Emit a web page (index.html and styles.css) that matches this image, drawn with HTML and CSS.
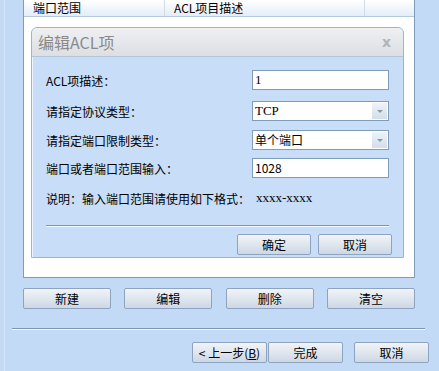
FILE: index.html
```html
<!DOCTYPE html>
<html lang="zh-CN">
<head>
  <meta charset="UTF-8" />
  <title>编辑ACL项</title>
  <link rel="stylesheet" href="styles.css">
</head>
<body>
  <div class="wizard">
    <div class="list">
      <div class="list-head">
        <div class="col col-port">端口范围</div>
        <div class="col col-desc">ACL项目描述</div>
        <div class="col col-rest"></div>
      </div>
      <div class="list-body"></div>
    </div>

    <div class="list-actions">
      <button class="btn btn-wide">新建</button>
      <button class="btn btn-wide">编辑</button>
      <button class="btn btn-wide">删除</button>
      <button class="btn btn-wide">清空</button>
    </div>

    <div class="sep wizard-sep"></div>

    <div class="wizard-nav">
      <button class="btn btn-nav">&lt; 上一步(<u>B</u>)</button>
      <button class="btn btn-nav">完成</button>
      <button class="btn btn-nav btn-cancel">取消</button>
    </div>

    <div class="dialog">
      <div class="dialog-title">
        <span>编辑ACL项</span>
        <span class="dialog-close">x</span>
      </div>
      <div class="dialog-body">
        <div class="row row-1">
          <label>ACL项描述：</label>
          <div class="field"><span class="val serif">1</span></div>
        </div>
        <div class="row row-2">
          <label>请指定协议类型：</label>
          <div class="field select"><span class="val serif">TCP</span><span class="drop"></span></div>
        </div>
        <div class="row row-3">
          <label>请指定端口限制类型：</label>
          <div class="field select"><span class="val">单个端口</span><span class="drop"></span></div>
        </div>
        <div class="row row-4">
          <label>端口或者端口范围输入：</label>
          <div class="field"><span class="val">1028</span></div>
        </div>
        <div class="row row-note">
          <label>说明：输入端口范围请使用如下格式：</label>
          <span class="serif note">xxxx-xxxx</span>
        </div>
        <div class="sep dialog-sep"></div>
        <div class="dialog-actions">
          <button class="btn btn-dlg">确定</button>
          <button class="btn btn-dlg">取消</button>
        </div>
      </div>
    </div>
  </div>
</body>
</html>
```

FILE: styles.css
```css
body {
  margin: 0;
  width: 439px;
  height: 371px;
  overflow: hidden;
  background: #c3daf7;
  font-family: "Noto Sans CJK SC", "DejaVu Sans", sans-serif;
  font-size: 12px;
  color: #000;
}
.wizard {
  position: relative;
  height: 371px;
  border-left: 1px solid #d3e4fa;
  margin-left: 4px;
}
.list {
  margin-left: 18px;
  width: 390px;
  height: 277px;
  background: #fff;
  border: 1px solid #7f9db9;
  border-top: none;
  display: flex;
  flex-direction: column;
}
.list-head {
  display: flex;
  height: 16px;
  background: linear-gradient(#ffffff, #e4edf8);
  border-bottom: 1px solid #b5c8e0;
  line-height: 15px;
}
.col {
  padding-left: 9px;
  border-right: 1px solid #d2dbe6;
}
.col-port { width: 131px; }
.col-desc { width: 190px; }
.col-rest { flex: 1; border-right: none; }
.list-body { flex: 1; }

.btn {
  font-family: "Noto Sans CJK SC", "DejaVu Sans", sans-serif;
  font-size: 12px;
  color: #000;
  height: 21px;
  padding: 0;
  line-height: 19px;
  border: 1px solid #8ea3bf;
  border-radius: 2px;
  background: linear-gradient(#f1f4f8, #dfe6ee 50%, #cdd8e5);
}
.list-actions {
  display: flex;
  justify-content: space-between;
  margin: 10px 0 0 18px;
  width: 392px;
}
.btn-wide { width: 88px; }

.sep {
  height: 1px;
  background: #7f95b1;
  border-bottom: 1px solid #f3f8fe;
}
.wizard-sep {
  margin: 19px 14px 0 7px;
}
.wizard-nav {
  display: flex;
  margin: 12px 0 0 187px;
}
.btn-nav { width: 75px; height: 21px; margin-right: 0; }
.btn-nav + .btn-nav { margin-left: 1px; }
.btn-nav.btn-cancel { margin-left: 11px; }

.dialog {
  position: absolute;
  left: 26px;
  top: 27px;
  width: 371px;
  height: 229px;
  border: 1px solid #9db3cf;
  border-radius: 6px 6px 0 0;
  background: #c7ddf8;
  display: flex;
  flex-direction: column;
}
.dialog-title {
  height: 28px;
  display: flex;
  justify-content: space-between;
  align-items: center;
  padding: 0 12px 0 6px;
  border-radius: 5px 5px 0 0;
  background: linear-gradient(#eef0f2, #dcdfe3);
  border-bottom: 1px solid #b4c3d6;
  font-size: 16px;
  color: #8a8a8a;
}
.dialog-close {
  font-size: 14px;
  color: #b0b4ba;
  font-family: "DejaVu Sans", sans-serif;
  font-weight: bold;
}
.dialog-body {
  flex: 1;
  border-left: 1px solid #eef5fd;
  padding: 13px 14px 0 13px;
}
.row {
  display: flex;
  align-items: center;
  justify-content: space-between;
  height: 20px;
}
.row-1 { margin-bottom: 11px; }
.row-2 { margin-bottom: 9px; }
.row-3 { margin-bottom: 8px; }
.row-4 { margin-bottom: 10px; }
.row-note { justify-content: flex-start; }
.note { margin-left: 6px; font-size: 12px; }
.field {
  width: 135px;
  height: 18px;
  background: #fff;
  border: 1px solid #7f9db9;
  display: flex;
  align-items: center;
  justify-content: space-between;
}
.val { padding-left: 2px; line-height: 18px; }
.serif { font-family: "Liberation Serif", "Noto Sans CJK SC", serif; font-size: 13px; }
.drop {
  width: 15px;
  height: 16px;
  margin-right: 1px;
  background: linear-gradient(#eef3f9, #d3deea);
  position: relative;
}
.drop::after {
  content: "";
  position: absolute;
  left: 5px;
  top: 7px;
  border-left: 3px solid transparent;
  border-right: 3px solid transparent;
  border-top: 3px solid #8b98aa;
}
.dialog-sep {
  margin: 17px 0 0 0;
}
.dialog-actions {
  display: flex;
  justify-content: flex-end;
  gap: 7px;
  margin-top: 7px;
  margin-right: -3px;
}
.btn-dlg { width: 74px; }
```
